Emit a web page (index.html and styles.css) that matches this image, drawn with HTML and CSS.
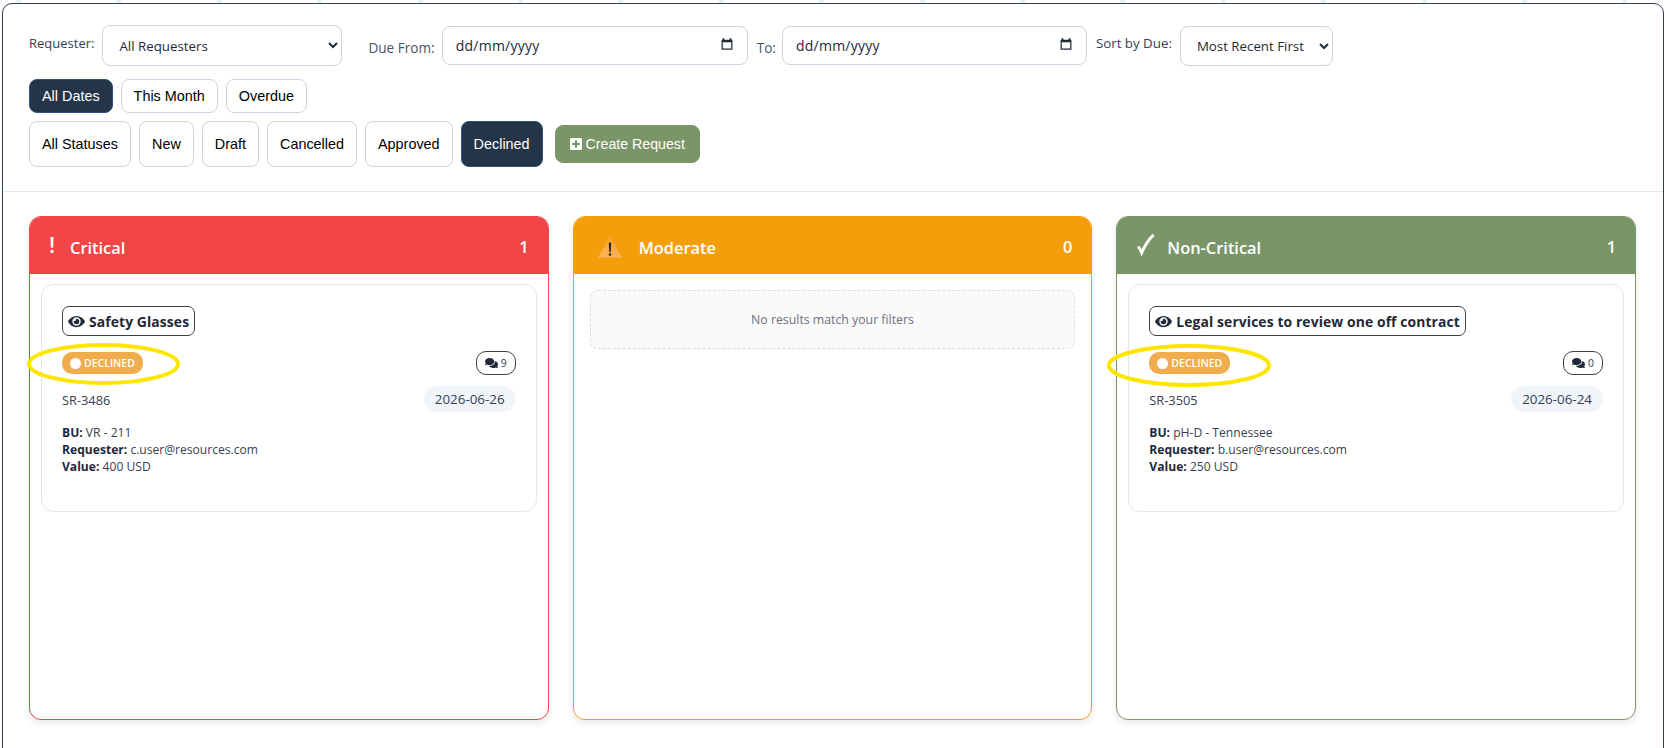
FILE: index.html
```html
<!DOCTYPE html>
<html lang="en">
<head>
<meta charset="utf-8">
<title>Requests</title>
<link rel="stylesheet" href="styles.css">
</head>
<body>
<svg width="0" height="0" class="defs">
  <symbol id="i-eye" viewBox="0 0 576 512"><path d="M572.52 241.4C518.29 135.59 410.93 64 288 64S57.68 135.64 3.48 241.41a32.35 32.35 0 0 0 0 29.19C57.71 376.41 165.07 448 288 448s230.32-71.64 284.52-177.41a32.35 32.35 0 0 0 0-29.19zM288 400a144 144 0 1 1 144-144 143.93 143.93 0 0 1-144 144zm0-240a95.31 95.31 0 0 0-25.31 3.79 47.85 47.85 0 0 1-66.9 66.9A95.78 95.78 0 1 0 288 160z"/></symbol>
  <symbol id="i-comments" viewBox="0 0 576 512"><path d="M416 192c0-88.4-93.1-160-208-160S0 103.6 0 192c0 34.3 14.1 65.9 38 92-13.4 30.2-35.5 54.2-35.8 54.5-2.2 2.3-2.8 5.7-1.5 8.7S4.8 352 8 352c36.6 0 66.9-12.3 88.7-25 32.2 15.7 70.3 25 111.3 25 114.9 0 208-71.6 208-160zm122 220c23.9-26 38-57.7 38-92 0-66.9-53.5-124.2-129.3-148.1.9 6.6 1.3 13.3 1.3 20.1 0 105.9-107.7 192-240 192-10.8 0-21.3-.8-31.7-1.9C207.8 439.6 281.8 480 368 480c41 0 79.1-9.2 111.3-25 21.8 12.7 52.1 25 88.7 25 3.2 0 6.1-1.9 7.3-4.8 1.3-2.9.7-6.3-1.5-8.7-.3-.3-22.4-24.2-35.8-54.5z"/></symbol>
  <symbol id="i-plus" viewBox="0 0 448 512"><path d="M400 32H48C21.5 32 0 53.5 0 80v352c0 26.5 21.5 48 48 48h352c26.5 0 48-21.5 48-48V80c0-26.5-21.5-48-48-48zm-32 252c0 6.6-5.4 12-12 12h-92v92c0 6.6-5.4 12-12 12h-56c-6.6 0-12-5.4-12-12v-92H92c-6.6 0-12-5.4-12-12v-56c0-6.6 5.4-12 12-12h92v-92c0-6.6 5.4-12 12-12h56c6.6 0 12 5.4 12 12v92h92c6.6 0 12 5.4 12 12v56z"/></symbol>
  <symbol id="i-cal" viewBox="0 0 16 16"><path d="M3 1.5h2v1.5h6V1.5h2V3h1.2v11.5H1.8V3H3zM3.2 6v7.1h9.6V6z"/></symbol>
</svg>
<main class="frame">
  <section class="toolbar">
    <div class="filters">
      <label class="lbl lbl-top">Requester:</label>
      <select class="sel sel-req"><option>All Requesters</option></select>
      <label class="lbl lbl-due">Due From:</label>
      <div class="date date-from"><span>dd/mm/yyyy</span><svg class="cal"><use href="#i-cal"/></svg></div>
      <label class="lbl lbl-to">To:</label>
      <div class="date date-to"><span>dd/mm/yyyy</span><svg class="cal"><use href="#i-cal"/></svg></div>
      <label class="lbl lbl-top lbl-sort">Sort by Due:</label>
      <select class="sel sel-sort"><option>Most Recent First</option></select>
    </div>
    <div class="btn-row row-dates">
      <button class="btn active">All Dates</button>
      <button class="btn">This Month</button>
      <button class="btn">Overdue</button>
    </div>
    <div class="btn-row row-status">
      <button class="btn tall">All Statuses</button>
      <button class="btn tall">New</button>
      <button class="btn tall">Draft</button>
      <button class="btn tall">Cancelled</button>
      <button class="btn tall">Approved</button>
      <button class="btn tall active">Declined</button>
      <button class="btn create"><svg class="plus"><use href="#i-plus"/></svg> Create Request</button>
    </div>
  </section>
  <section class="board">
    <article class="col col-critical">
      <header class="col-head">
        <span class="head-icon bang">!</span><span class="head-title">Critical</span><span class="head-count">1</span>
      </header>
      <div class="col-body">
        <div class="card">
          <button class="title-btn"><svg class="eye"><use href="#i-eye"/></svg>Safety Glasses</button>
          <div class="meta-row">
            <span class="badge"><i class="dot"></i>DECLINED</span>
            <span class="comments"><svg class="cmt"><use href="#i-comments"/></svg>9</span>
          </div>
          <div class="id-row">
            <span class="sr">SR-3486</span>
            <span class="due">2026-06-26</span>
          </div>
          <div class="details">
            <div><b>BU:</b> VR - 211</div>
            <div><b>Requester:</b> c.user@resources.com</div>
            <div><b>Value:</b> 400 USD</div>
          </div>
        </div>
      </div>
    </article>
    <article class="col col-moderate">
      <header class="col-head">
        <svg class="warn" viewBox="0 0 24 22"><defs><linearGradient id="warn-fill" x1="0" y1="0" x2="0" y2="1"><stop offset="0" stop-color="#f7a32a"/><stop offset="1" stop-color="#ffb45c"/></linearGradient></defs><path d="M12 .4 23.8 21.6H.2z" fill="url(#warn-fill)"/><path d="M10.8 6.5h2.4l-.4 9.4h-1.6zM10.9 17.2h2.2v2.6h-2.2z" fill="#2f2a22"/></svg>
        <span class="head-title">Moderate</span><span class="head-count">0</span>
      </header>
      <div class="col-body">
        <div class="empty">No results match your filters</div>
      </div>
    </article>
    <article class="col col-non">
      <header class="col-head">
        <svg class="check" viewBox="0 0 18 22"><path d="M1 12.5c1.6 1.5 2.8 3.6 3.7 6.2C7.6 12 11 6 16.6 1" fill="none" stroke="#fff" stroke-width="3"/></svg>
        <span class="head-title">Non-Critical</span><span class="head-count">1</span>
      </header>
      <div class="col-body">
        <div class="card">
          <button class="title-btn"><svg class="eye"><use href="#i-eye"/></svg>Legal services to review one off contract</button>
          <div class="meta-row">
            <span class="badge"><i class="dot"></i>DECLINED</span>
            <span class="comments"><svg class="cmt"><use href="#i-comments"/></svg>0</span>
          </div>
          <div class="id-row">
            <span class="sr">SR-3505</span>
            <span class="due">2026-06-24</span>
          </div>
          <div class="details">
            <div><b>BU:</b> pH-D - Tennessee</div>
            <div><b>Requester:</b> b.user@resources.com</div>
            <div><b>Value:</b> 250 USD</div>
          </div>
        </div>
      </div>
    </article>
  </section>
</main>
<svg class="mark mark-a" viewBox="0 0 153 42"><ellipse cx="76.5" cy="21" rx="74.5" ry="19"/></svg>
<svg class="mark mark-b" viewBox="0 0 164 43"><ellipse cx="82" cy="21.5" rx="80" ry="19.5"/></svg>
</body>
</html>
```
FILE: styles.css
```css
* { box-sizing: border-box; }
html, body { margin: 0; height: 100%; overflow: hidden; }
body {
  font-family: "Open Sans", "Noto Sans", sans-serif;
  color: #1f2937;
  position: relative;
  background: #fff repeating-linear-gradient(90deg, transparent 0 16px, #eceff3 16px 21px, transparent 21px 100.4px) top / 100% 3px no-repeat;
}
.defs { position: absolute; }

.frame {
  margin: 3px 0 0 2px;
  width: 1662px;
  height: 780px;
  border: 1px solid #334155;
  border-radius: 10px;
  background: #fff;
}

.toolbar {
  height: 188px;
  padding: 21px 27px 0 26px;
  border-bottom: 1px solid #e2e8f0;
}
.filters { display: flex; align-items: flex-start; height: 42px; }
.lbl { font-size: 13px; color: #334155; white-space: nowrap; }
.lbl-top { margin-top: 9px; }
.lbl-due { margin: 13px 7px 0 26px; color: #475569; font-size: 13.6px; }
.lbl-to { margin: 13px 6px 0 9px; color: #475569; font-size: 13.6px; }
.lbl-sort { margin-left: 9px; margin-right: 8px; font-size: 13.3px; }
.sel {
  height: 41px;
  border: 1px solid #cbd5e1;
  border-radius: 8px;
  background: #fff;
  font: 13.3px "Open Sans", "Noto Sans", sans-serif;
  color: #1f2937;
  padding: 0 12px;
}
.sel-req { width: 240px; margin-left: 8px; }
.sel-sort { width: 153px; margin-top: 1px; height: 40px; }
.date {
  display: flex; align-items: center; justify-content: space-between;
  height: 39px; margin-top: 1px;
  border: 1px solid #cbd5e1; border-radius: 8px;
  padding: 0 13px;
  font-size: 14px; color: #1f2937; letter-spacing: .25px;
}
.date-from { width: 306px; }
.date-to { width: 305px; }
.cal { width: 14px; height: 14px; fill: #1f2937; margin-top: -3px; }

.btn-row { display: flex; gap: 8px; }
.row-dates { margin-top: 12px; }
.row-status { margin-top: 8px; align-items: center; }
.btn {
  height: 34px; padding: 0 12px;
  border: 1px solid #cbd5e1; border-radius: 8px;
  background: #fff; color: #000;
  font: 14.4px "Liberation Sans", Arial, sans-serif;
}
.btn.tall { height: 46px; }
.btn.active { background: #243449; color: #fff; border-color: #2c5282; }
.btn.create {
  height: 38px; margin-left: 4px; padding: 0 14px;
  background: #7a9567; border-color: #7a9567; color: #fff;
  font-size: 14.2px;
}
.plus { width: 12px; height: 14px; fill: #fff; vertical-align: -2px; }

.board {
  display: grid;
  grid-template-columns: repeat(3, 1fr);
  gap: 24px;
  padding: 24px 27px 0 26px;
}
.col {
  height: 504px;
  border: 1px solid;
  border-radius: 12px;
  background: #fff;
  box-shadow: 0 4px 6px rgba(0,0,0,.08);
  overflow: hidden;
}
.col-critical { border-color: #ef4444; }
.col-moderate { border-color: #f59e0b; }
.col-non { border-color: #7a9567; }
.col-head {
  display: flex; align-items: center;
  height: 58px; margin: -1px -1px 0;
  padding: 0 20px 0 20px;
  color: #fff;
  font-size: 16.4px; font-weight: 600;
}
.col-critical .col-head { background: #f24548; }
.col-moderate .col-head { background: #f59e0b; padding-left: 25px; }
.col-non .col-head { background: #7a9567; padding-left: 20px; }
.head-title { flex: 1; margin-top: 5px; }
.head-count { font-size: 16.4px; margin-top: 3px; }
.head-icon.bang { font-size: 22px; width: 21px; margin-top: -3px; }
.warn { width: 24px; height: 22px; margin-right: 17px; margin-top: 3px; }
.check { width: 20px; height: 22px; margin-right: 11px; margin-top: 0; }

.col-body { padding: 10px 11px; }
.card {
  height: 228px;
  border: 1px solid #e2e8f0;
  border-radius: 12px;
  padding: 21px 20px 20px 20px;
}
.title-btn {
  display: inline-flex; align-items: center; gap: 4px;
  height: 30px; padding: 0 5px;
  border: 1px solid #3f3f46; border-radius: 7px;
  background: #fff; color: #1f2937;
  font: 700 13.9px "Open Sans", "Noto Sans", sans-serif;
  letter-spacing: .1px;
}
.eye { width: 17px; height: 15px; fill: #1f2937; }
.meta-row { display: flex; align-items: center; justify-content: space-between; margin-top: 15px; height: 24px; }
.badge {
  display: inline-flex; align-items: center; gap: 3px;
  height: 22px; padding: 0 8px;
  border-radius: 10px;
  background: #f0ad4e; color: #fff;
  font-size: 10.5px; font-weight: 600;
}
.dot { width: 11px; height: 11px; border-radius: 50%; background: #fff; }
.comments {
  display: inline-flex; align-items: center; gap: 3px;
  height: 24px; padding: 0 8px;
  border: 1px solid #3f3f46; border-radius: 10px;
  font-size: 10.5px; color: #334155;
}
.cmt { width: 13px; height: 12px; fill: #1f2937; }
.id-row { display: flex; align-items: center; justify-content: space-between; margin-top: 11px; }
.sr { font-size: 12.8px; color: #374151; margin-top: 2px; }
.due {
  height: 26px; padding: 0 11px;
  display: inline-flex; align-items: center;
  border-radius: 13px;
  background: #f1f5f9; color: #334155;
  font-size: 13.4px;
}
.details { margin-top: 12px; font-size: 12.1px; line-height: 17px; color: #374151; }
.details b { font-weight: 700; color: #1f2937; }

.empty {
  display: flex; align-items: center; justify-content: center;
  height: 59px; margin: 6px 5px 0 5px;
  border: 1px dashed #d9dde3; border-radius: 8px;
  background: #fafafa;
  color: #6b7280; font-size: 12.3px;
}

.mark { position: absolute; fill: none; stroke: #ffe600; stroke-width: 4; }
.mark-a { left: 27px; top: 343px; width: 153px; height: 42px; }
.mark-b { left: 1107px; top: 344px; width: 164px; height: 43px; }
```
